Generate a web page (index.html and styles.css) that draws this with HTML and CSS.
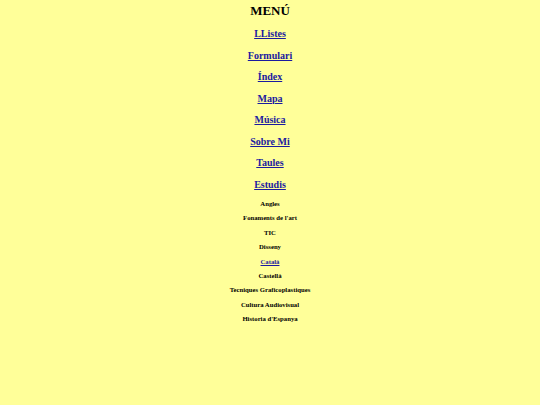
FILE: index.html
```html
<!DOCTYPE html>
<html lang="ca">
<head>
<meta charset="utf-8">
<title>Menú</title>
<link rel="stylesheet" href="styles.css">
</head>
<body>
<nav class="menu">
  <h2 class="menu-title">MENÚ</h2>
  <h3 class="menu-item"><a href="#">LListes</a></h3>
  <h3 class="menu-item"><a href="#">Formulari</a></h3>
  <h3 class="menu-item"><a href="#">Índex</a></h3>
  <h3 class="menu-item"><a href="#">Mapa</a></h3>
  <h3 class="menu-item"><a href="#">Música</a></h3>
  <h3 class="menu-item"><a href="#">Sobre Mi</a></h3>
  <h3 class="menu-item"><a href="#">Taules</a></h3>
  <h3 class="menu-item"><a href="#">Estudis</a></h3>
  <h6 class="sub-item">Angles</h6>
  <h6 class="sub-item">Fonaments de l'art</h6>
  <h6 class="sub-item">TIC</h6>
  <h6 class="sub-item">Disseny</h6>
  <h6 class="sub-item"><a href="#">Català</a></h6>
  <h6 class="sub-item">Castellà</h6>
  <h6 class="sub-item">Tecniques Graficoplastiques</h6>
  <h6 class="sub-item">Cultura Audiovisual</h6>
  <h6 class="sub-item">Historia d'Espanya</h6>
</nav>
</body>
</html>
```
FILE: styles.css
```css
html, body {
  margin: 0;
  padding: 0;
}
body {
  background: #ffff99;
  font-family: "Liberation Serif", "Times New Roman", serif;
  color: #000;
  min-height: 405px;
}
.menu {
  display: flow-root;
  text-align: center;
  padding-top: 3px;
}
.menu-title {
  font-size: 13px;
  line-height: 15px;
  font-weight: bold;
  margin: 0 0 9px;
}
.menu-item {
  font-size: 10px;
  line-height: 11.5px;
  font-weight: bold;
  margin: 10px 0;
}
.sub-item {
  font-size: 6.7px;
  line-height: 7.7px;
  font-weight: bold;
  margin: 6.7px 0;
}
a {
  color: #1a1aa0;
  text-decoration: underline;
}
```
